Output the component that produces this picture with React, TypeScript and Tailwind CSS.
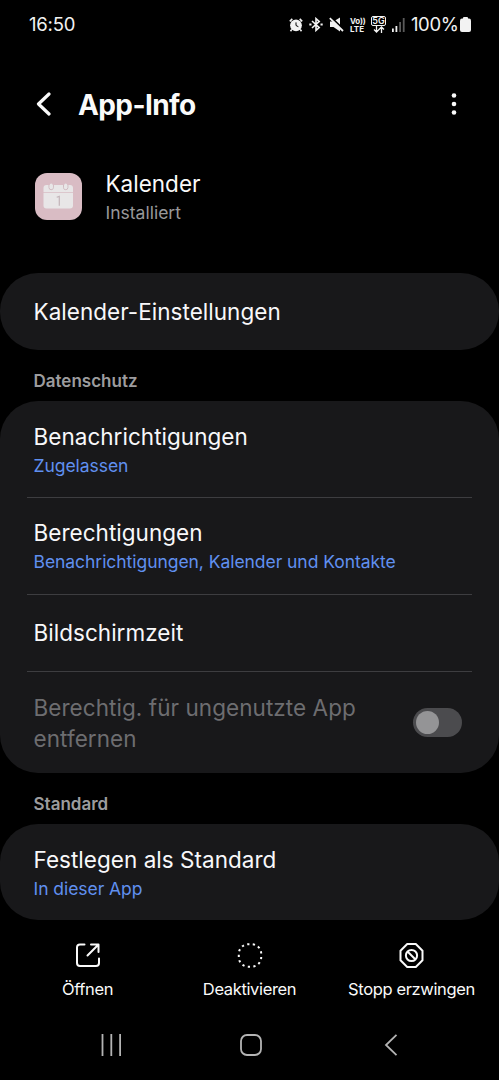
import type { ReactNode } from 'react';
import clsx from 'clsx';

interface RowProps {
  title: string;
  summary?: string;
  className?: string;
}

function Row({ title, summary, className }: RowProps) {
  return (
    <div className={clsx('flex flex-col justify-center px-[33.5px] whitespace-nowrap', className)}>
      <div className="text-[22.5px] leading-8 tracking-[0.03px] text-[#f8f8fa]">{title}</div>
      {summary && (
        <div className="text-[17.5px] leading-[25px] tracking-[-0.05px] text-[#6090f0]">{summary}</div>
      )}
    </div>
  );
}

function Card({ children, className }: { children: ReactNode; className?: string }) {
  return <section className={clsx('shrink-0 rounded-[38px] bg-[#18181a]', className)}>{children}</section>;
}

function Divider() {
  return <div className="mx-[27px] h-px bg-[#3d3d40]" />;
}

function SectionLabel({ children }: { children: ReactNode }) {
  return (
    <h2 className="flex h-[51px] shrink-0 items-center px-[33.5px] pt-[13px] text-[17px] font-semibold text-[#9c9c9e]">
      {children}
    </h2>
  );
}

function StatusBar() {
  return (
    <header className="flex h-[49px] shrink-0 items-center pr-[28px] pl-[29px] text-[#f2f2f2]">
      <span className="text-[18.5px] tracking-[-0.2px]">16:50</span>
      <div className="ml-auto flex items-center">
        {/* alarm */}
        <svg width="14" height="14" viewBox="0 0 14 14" fill="none">
          <path d="M.8 3.3 3.3.9M13.2 3.3 10.7.9M2.8 11.4l-1.3 1.8M11.2 11.4l1.3 1.8" stroke="currentColor" strokeWidth="1.6" />
          <circle cx="7" cy="7.3" r="5.9" fill="currentColor" />
          <path d="M7 4.4v3.1l2.4 1.2" stroke="#000" strokeWidth="1" />
        </svg>
        {/* bluetooth */}
        <svg className="ml-[6px]" width="14" height="15" viewBox="0 0 14 15" fill="none" stroke="currentColor" strokeWidth="1.6">
          <path d="m3 4 7.2 6.6L7 13.4V1.6l3.200 2.800L3 11" />
          <path d="M.3 7.500h2.200M11.500 7.500h2.200" strokeWidth="2" />
        </svg>
        {/* muted */}
        <svg className="ml-[6px]" width="15" height="15" viewBox="0 0 15 15">
          <path d="M1 4.500h3.500L11 .5v14l-6.500-4.500H1z" fill="currentColor" />
          <path d="m1.800 0 13.500 13" stroke="#000" strokeWidth="1.800" />
          <path d="m.8 1.200 13.200 12.800" stroke="currentColor" strokeWidth="1.800" />
        </svg>
        <div className="ml-[6px] flex w-[16px] flex-col text-[8px] leading-[8px] font-bold">
          <span className="tracking-[-0.2px] whitespace-nowrap">Vo))</span>
          <span>LTE</span>
        </div>
        <div className="ml-[5px] flex w-[15px] flex-col items-center">
          <span className="flex h-[10px] w-[15px] items-center justify-center rounded-[2px] border border-current text-[9px] font-semibold">5G</span>
          <svg width="12" height="7" viewBox="0 0 12 7" fill="none" stroke="currentColor" strokeWidth="1.300">
            <path d="M3.500 0v6M1 3.500 3.500 6 6 3.500M8.500 7V1M6 3.500 8.500 1 11 3.500" />
          </svg>
        </div>
        {/* signal strength */}
        <svg className="ml-[6px]" width="13" height="14" viewBox="0 0 13 14">
          <path d="M0 10.500h1.800V14H0zM3.500 8h1.800v6H3.500z" fill="currentColor" />
          <path d="M7.200 4H9v10H7.200zM10.800 0h1.800v14h-1.800z" fill="#5a5a5a" />
        </svg>
        <span className="ml-[6px] w-[48px] text-[18.500px] tracking-[-0.400px] whitespace-nowrap">100%</span>
        <svg className="ml-px" width="11" height="15" viewBox="0 0 11 15" fill="currentColor">
          <rect x="3" width="5" height="4" rx="1" />
          <rect y="1.500" width="11" height="13.500" rx="2" />
        </svg>
      </div>
    </header>
  );
}

function AppIcon() {
  return (
    <svg width="47" height="47" viewBox="0 0 47 47">
      <rect width="47" height="47" rx="12" fill="#d9bcc4" />
      <path d="M8.500 18.900V15a3 3 0 0 1 3-3h23.500a3 3 0 0 1 3 3v3.900z" fill="#e8e6e7" />
      <path d="M8.500 19.700H38v12.900a3 3 0 0 1-3 3H11.500a3 3 0 0 1-3-3z" fill="#e8e6e7" />
      <path d="M14 12v2.500a2.200 2.200 0 0 0 4.400 0V12M28.500 12v2.500a2.200 2.200 0 0 0 4.400 0V12" fill="none" stroke="#c9afb6" strokeWidth=".8" />
      <path d="M16.200 12v2.500M30.700 12v2.500" stroke="#e8e6e7" strokeWidth="3" strokeLinecap="round" />
      <path d="M21.700 24.300 24.300 23.400v9.300" fill="none" stroke="#c3b4b9" strokeWidth="1.200" />
    </svg>
  );
}

function Action({ label, children }: { label: string; children: ReactNode }) {
  return (
    <button className="flex w-[162px] flex-col items-center text-[#fafafa]">
      {children}
      <span className="mt-[8px] text-[16.500px] leading-6 tracking-[-0.360px] whitespace-nowrap">{label}</span>
    </button>
  );
}

export default function App() {
  return (
    <div className="flex h-[1080px] w-[499px] flex-col overflow-hidden bg-black font-['Inter','Roboto',sans-serif]">
      <StatusBar />

      <div className="mt-[30px] flex h-[50px] shrink-0 items-center pr-[42px] pl-[35px] text-[#fafafa]">
        <svg width="17" height="24" viewBox="0 0 17 24" fill="none" stroke="currentColor" strokeWidth="3.200" strokeLinecap="round" strokeLinejoin="round">
          <path d="M14 2 3.500 12 14 22" />
        </svg>
        <h1 className="ml-[26px] pt-px text-[28px] font-bold tracking-[-0.600px] whitespace-nowrap">App-Info</h1>
        <svg className="ml-auto" width="6" height="22" viewBox="0 0 6 22" fill="currentColor">
          <circle cx="3" cy="2.500" r="2.300" />
          <circle cx="3" cy="11" r="2.300" />
          <circle cx="3" cy="19.500" r="2.300" />
        </svg>
      </div>

      <div className="mt-[40px] flex h-[55px] shrink-0 items-center pl-[35px]">
        <AppIcon />
        <div className="ml-[23.500px] pt-px whitespace-nowrap">
          <div className="text-[22.500px] leading-[30px] text-[#fafafa]">Kalender</div>
          <div className="text-[17.500px] leading-[27px] text-[#98989a]">Installiert</div>
        </div>
      </div>

      <Card className="mt-[49px]">
        <Row title="Kalender-Einstellungen" className="h-[77px]" />
      </Card>

      <SectionLabel>Datenschutz</SectionLabel>
      <Card>
        <Row title="Benachrichtigungen" summary="Zugelassen" className="h-[96px]" />
        <Divider />
        <Row title="Berechtigungen" summary="Benachrichtigungen, Kalender und Kontakte" className="h-[96px] pb-px" />
        <Divider />
        <Row title="Bildschirmzeit" className="h-[76px]" />
        <Divider />
        <div className="flex h-[101px] items-center justify-between pr-[37px] pl-[33.500px]">
          <div className="text-[22.500px] leading-[31px] tracking-[0.060px] whitespace-nowrap text-[#6d6d70]">
            <div>Berechtig. für ungenutzte App</div>
            <div>entfernen</div>
          </div>
          <div role="switch" aria-checked="false" className="flex h-[29px] w-[49px] items-center rounded-full bg-[#4b4b4e] pl-[3px]">
            <span className="size-[23px] rounded-full bg-[#949496]" />
          </div>
        </div>
      </Card>

      <SectionLabel>Standard</SectionLabel>
      <Card>
        <Row title="Festlegen als Standard" summary="In dieser App" className="h-[96px]" />
      </Card>

      <div className="mt-[22px] flex shrink-0 justify-center">
        <Action label="Öffnen">
          <svg width="26" height="27" viewBox="0 0 26 27" fill="none" stroke="currentColor" strokeWidth="2" strokeLinecap="round" strokeLinejoin="round">
            <path d="M9.500 2.500H5a3 3 0 0 0-3 3V21a3 3 0 0 0 3 3h16a3 3 0 0 0 3-3v-4.500M16 2.500h7.500V10M23 3 12.500 13.500" />
          </svg>
        </Action>
        <Action label="Deaktivieren">
          <svg width="26" height="27" viewBox="0 0 26 27" fill="none" stroke="currentColor" strokeWidth="2">
            <rect x="1.800" y="2.300" width="22.400" height="22.400" rx="9.500" pathLength="65" strokeDasharray="2 3" strokeDashoffset="1" />
          </svg>
        </Action>
        <Action label="Stopp erzwingen">
          <svg width="26" height="27" viewBox="0 0 26 27" fill="none" stroke="currentColor" strokeWidth="2" strokeLinejoin="round">
            <path d="M8.200 2h8.600l6.700 6.700v9.600L16.800 25H8.200l-6.700-6.700V8.700z" />
            <circle cx="12.500" cy="13.500" r="5.600" />
            <path d="m8.500 9.500 8 8" />
          </svg>
        </Action>
      </div>

      <nav className="mt-[33px] flex shrink-0 items-center text-[#b4b4b4]">
        <svg className="ml-[101px]" width="21" height="22" viewBox="0 0 21 22" stroke="currentColor" strokeWidth="1.800">
          <path d="M1.500 0v22M10.300 0v22M19.100 0v22" />
        </svg>
        <svg className="ml-[118px]" width="22" height="22" viewBox="0 0 22 22" fill="none" stroke="currentColor" strokeWidth="1.800">
          <rect x="1" y="1" width="20" height="20" rx="6" />
        </svg>
        <svg className="ml-[122px]" width="14" height="22" viewBox="0 0 14 22" fill="none" stroke="currentColor" strokeWidth="1.800">
          <path d="M12.500.8 2 11l10.500 10.200" />
        </svg>
      </nav>
    </div>
  );
}
